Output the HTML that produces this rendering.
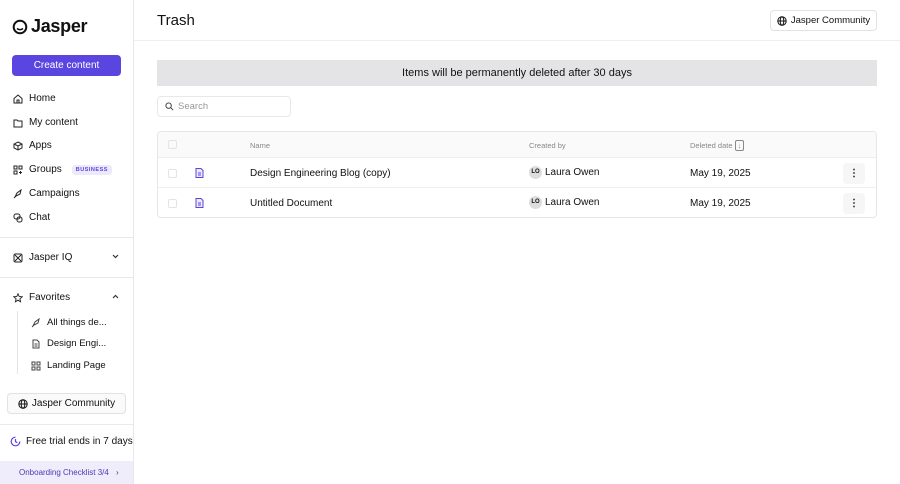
<!DOCTYPE html>
<html><head><style>
*{box-sizing:border-box;margin:0;padding:0}
body{width:900px;height:484px;font-family:"Liberation Sans",sans-serif;color:#111;background:#fff;position:relative;overflow:hidden;font-size:10px}
.sb{position:absolute;left:0;top:0;width:134px;height:484px;border-right:1px solid #e8e8e8}
.logo{position:absolute;left:12px;top:16px;font-size:18px;display:flex;align-items:center;gap:3px;letter-spacing:-.3px}
.btn{position:absolute;left:12px;top:55px;width:109px;height:21px;background:#5b45e0;color:#fff;border-radius:4px;font-size:10px;text-align:center;line-height:21px}
.nav{position:absolute;left:13px;font-size:10px;display:flex;align-items:center;gap:6px;white-space:nowrap}
.ic{width:10px;height:10px}
.hr{position:absolute;left:0;width:133px;height:1px;background:#eaeaea}
.badge{font-size:5.5px;font-weight:bold;color:#5b45e0;background:#ece9fb;padding:2px 4px;border-radius:3px;letter-spacing:.5px;margin-left:4px}
.title{position:absolute;left:157px;top:12px;font-size:15px}
.topbtn{position:absolute;right:23px;top:10px;width:107px;height:21px;border:1px solid #e2e2e2;border-radius:4px;font-size:9.5px;display:flex;align-items:center;justify-content:center;gap:4px}
.banner{position:absolute;left:157px;top:60px;width:720px;height:26px;background:#e4e4e7;font-size:11px;text-align:center;line-height:26px}
.search{position:absolute;left:157px;top:96px;width:134px;height:21px;border:1px solid #e8e8e8;border-radius:4px;font-size:9.5px;color:#999;display:flex;align-items:center;padding-left:7px;gap:4px}
.tbl{position:absolute;left:157px;top:131px;width:720px;height:87px;border:1px solid #e6e6e6;border-radius:4px;overflow:hidden}
.row{position:absolute;left:0;width:718px;font-size:10px}
.cb{position:absolute;left:10px;width:9px;height:9px;border:1px solid #e4e4e4;border-radius:2px}
.av{display:inline-block;width:13px;height:13px;border-radius:50%;background:#ddd;font-size:6px;font-weight:bold;text-align:center;line-height:13px;margin-right:3px;vertical-align:middle}
.dots{position:absolute;left:685px;width:22px;height:21px;background:#f6f6f6;border-radius:4px;text-align:center;line-height:21px;font-weight:bold}
</style></head><body>
<div class="sb">
<div class="logo"><svg width="16" height="16" viewBox="0 0 16 16"><circle cx="8" cy="8" r="6.3" fill="none" stroke="#111" stroke-width="2"/><path d="M5 9.5q3 2.5 6 0" fill="none" stroke="#111" stroke-width="1.5"/></svg><span style="font-weight:bold">Jasper</span></div>
<div class="btn">Create content</div>
<div class="nav" style="top:93px"><svg class="ic" viewBox="0 0 10 10"><path d="M1 4.5L5 1l4 3.5V9H1z M4 9V6h2v3" fill="none" stroke="#222"/></svg>Home</div>
<div class="nav" style="top:117px"><svg class="ic" viewBox="0 0 10 10"><path d="M1 2h3l1 1h4v6H1z" fill="none" stroke="#222"/></svg>My content</div>
<div class="nav" style="top:140px"><svg class="ic" viewBox="0 0 10 10"><path d="M5 1l4 2v4L5 9 1 7V3z M1 3l4 2 4-2M5 5v4" fill="none" stroke="#222"/></svg>Apps</div>
<div class="nav" style="top:164px"><svg class="ic" viewBox="0 0 10 10"><path d="M1 1h3v3H1zM6 1h3v3H6zM1 6h3v3H1zM7.5 6v3M6 7.5h3" fill="none" stroke="#222"/></svg>Groups<span class="badge">BUSINESS</span></div>
<div class="nav" style="top:188px"><svg class="ic" viewBox="0 0 10 10"><path d="M2 8l2-4 4-3-1 4-4 2zM1 9l2-2" fill="none" stroke="#222"/></svg>Campaigns</div>
<div class="nav" style="top:212px"><svg class="ic" viewBox="0 0 10 10"><rect x="1" y="1" width="6" height="5" rx="2" fill="none" stroke="#222"/><rect x="4" y="4" width="5" height="5" rx="2" fill="none" stroke="#222"/></svg>Chat</div>
<div class="hr" style="top:237px"></div>
<div class="nav" style="top:252px"><svg class="ic" viewBox="0 0 10 10"><rect x="1" y="1" width="8" height="8" rx="1.5" fill="none" stroke="#222"/><path d="M2 2l6 6M8 2L2 8" stroke="#222"/></svg>Jasper IQ</div>
<svg style="position:absolute;left:112px;top:254px" width="7" height="5" viewBox="0 0 7 5"><path d="M1 1l2.5 2.5L6 1" fill="none" stroke="#333" stroke-width="1.2"/></svg>
<div class="hr" style="top:277px"></div>
<div class="nav" style="top:292px"><svg class="ic" viewBox="0 0 10 10"><path d="M5 .8l1.2 2.7 3 .3-2.3 2 .7 3L5 7.2 2.4 8.8l.7-3-2.3-2 3-.3z" fill="none" stroke="#222" stroke-width=".9"/></svg>Favorites</div>
<svg style="position:absolute;left:112px;top:294px" width="7" height="5" viewBox="0 0 7 5"><path d="M1 4l2.5-2.5L6 4" fill="none" stroke="#333" stroke-width="1.2"/></svg>
<div style="position:absolute;left:17px;top:311px;width:1px;height:63px;background:#e4e4e4"></div>
<div class="nav" style="top:317px;left:31px;font-size:9.5px"><svg class="ic" viewBox="0 0 10 10"><path d="M2 8l2-4 4-3-1 4-4 2zM1 9l2-2" fill="none" stroke="#444"/></svg>All things de...</div>
<div class="nav" style="top:338px;left:31px;font-size:9.5px"><svg class="ic" viewBox="0 0 10 10"><path d="M2 1h4l2 2v6H2zM3.5 5h3M3.5 7h3" fill="none" stroke="#444"/></svg>Design Engi...</div>
<div class="nav" style="top:360px;left:31px;font-size:9.5px"><svg class="ic" viewBox="0 0 10 10"><path d="M1 1h3v3H1zM6 1h3v3H6zM1 6h3v3H1zM6 6h3v3H6z" fill="none" stroke="#444"/></svg>Landing Page</div>
<div style="position:absolute;left:7px;top:393px;width:119px;height:21px;border:1px solid #e2e2e2;border-radius:4px;background:#fafafa;font-size:10px;display:flex;align-items:center;justify-content:center;gap:4px"><svg width="10" height="10" viewBox="0 0 10 10"><circle cx="5" cy="5" r="4.2" fill="none" stroke="#111"/><ellipse cx="5" cy="5" rx="1.8" ry="4.2" fill="none" stroke="#111"/><path d="M1 5h8" stroke="#111"/></svg>Jasper Community</div>
<div class="hr" style="top:424px"></div>
<div class="nav" style="top:436px;left:10px;font-size:10px;gap:5px"><svg width="11" height="11" viewBox="0 0 11 11"><path d="M9.8 5.5A4.3 4.3 0 1 1 5.5 1.2" fill="none" stroke="#5b45e0" stroke-width="1.2"/><path d="M5.5 3v2.7l1.8 1" fill="none" stroke="#5b45e0" stroke-width="1.2"/></svg>Free trial ends in 7 days</div>
<div style="position:absolute;left:0;top:461px;width:133px;height:23px;background:#efedfb;color:#4a3bb5;font-size:8px;line-height:23px;padding-left:19px">Onboarding Checklist 3/4<span style="position:absolute;left:116px;color:#444">›</span></div>
</div>
<div style="position:absolute;left:134px;top:40px;right:0;height:1px;background:#eee"></div>
<div class="title">Trash</div>
<div class="topbtn"><svg width="10" height="10" viewBox="0 0 10 10"><circle cx="5" cy="5" r="4.2" fill="none" stroke="#111"/><ellipse cx="5" cy="5" rx="1.8" ry="4.2" fill="none" stroke="#111"/><path d="M1 5h8" stroke="#111"/></svg>Jasper Community</div>
<div class="banner">Items will be permanently deleted after 30 days</div>
<div class="search"><svg width="9" height="9" viewBox="0 0 10 10"><circle cx="4" cy="4" r="3" fill="none" stroke="#333"/><path d="M6.5 6.5L9 9" stroke="#333"/></svg>Search</div>
<div class="tbl">
<div class="row" style="top:0;height:26px;background:#fafafa;border-bottom:1px solid #eee;font-size:7.5px;color:#888">
<div class="cb" style="top:8px"></div>
<span style="position:absolute;left:92px;top:9px">Name</span>
<span style="position:absolute;left:371px;top:9px">Created by</span>
<span style="position:absolute;left:532px;top:9px">Deleted date <span style="border:1px solid #888;border-radius:2px;padding:0 2px">↓</span></span>
</div>
<div class="row" style="top:27px;height:29px;border-bottom:1px solid #eee">
<div class="cb" style="top:10px"></div>
<svg style="position:absolute;left:37px;top:9px" width="9" height="10" viewBox="0 0 9 10"><path d="M1 .5h5l2 2v7H1z" fill="#ece9fb" stroke="#5b45e0"/><path d="M3 5h3M3 7h3" stroke="#5b45e0"/></svg>
<span style="position:absolute;left:92px;top:9px">Design Engineering Blog (copy)</span>
<span style="position:absolute;left:371px;top:7px"><span class="av">LO</span>Laura Owen</span>
<span style="position:absolute;left:532px;top:9px">May 19, 2025</span>
<div class="dots" style="top:4px">⋮</div>
</div>
<div class="row" style="top:57px;height:29px">
<div class="cb" style="top:10px"></div>
<svg style="position:absolute;left:37px;top:9px" width="9" height="10" viewBox="0 0 9 10"><path d="M1 .5h5l2 2v7H1z" fill="#ece9fb" stroke="#5b45e0"/><path d="M3 5h3M3 7h3" stroke="#5b45e0"/></svg>
<span style="position:absolute;left:92px;top:9px">Untitled Document</span>
<span style="position:absolute;left:371px;top:7px"><span class="av">LO</span>Laura Owen</span>
<span style="position:absolute;left:532px;top:9px">May 19, 2025</span>
<div class="dots" style="top:4px">⋮</div>
</div>
</div>
</body></html>
